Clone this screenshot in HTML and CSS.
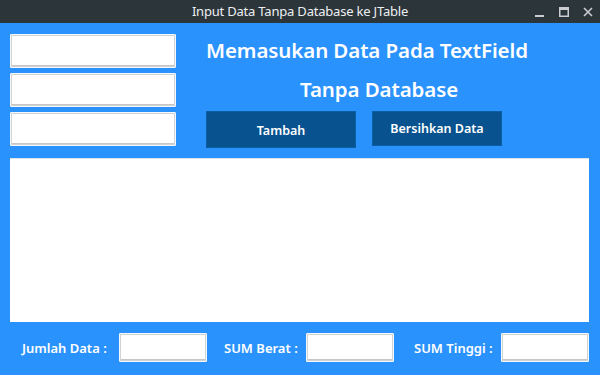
FILE: index.html
```html
<!DOCTYPE html>
<html lang="en">
<head>
    <meta charset="UTF-8">
    <meta name="viewport" content="width=device-width, initial-scale=1.0">
    <title>Input Data Tanpa Database ke JTable</title>
    <link rel="stylesheet" href="styles.css">
</head>
<body>
    <!-- Title bar -->
    <div class="titlebar">
        <span class="title">Input Data Tanpa Database ke JTable</span>
        <div class="win-controls">
            <svg width="10" height="10" viewBox="0 0 10 10"><rect x="0" y="8" width="9" height="2" fill="#c9cdd0"/></svg>
            <svg width="10" height="10" viewBox="0 0 10 10"><rect x="0.75" y="0.75" width="8.5" height="8.5" fill="none" stroke="#c9cdd0" stroke-width="1.5"/><rect x="0" y="0" width="10" height="3" fill="#c9cdd0"/></svg>
            <svg width="10" height="10" viewBox="0 0 10 10"><path d="M1 1 L9 9 M9 1 L1 9" stroke="#c9cdd0" stroke-width="1.6"/></svg>
        </div>
    </div>

    <!-- Main Content -->
    <div class="content">
        <div class="top-row">
            <div class="fields">
                <input type="text" class="field">
                <input type="text" class="field">
                <input type="text" class="field">
            </div>
            <div class="side">
                <h1 class="heading">Memasukan Data Pada TextField</h1>
                <h1 class="heading sub">Tanpa Database</h1>
                <div class="buttons">
                    <button class="btn btn-add">Tambah</button>
                    <button class="btn btn-clear">Bersihkan Data</button>
                </div>
            </div>
        </div>

        <div class="table"></div>

        <div class="summary">
            <label class="sum-label first">Jumlah Data :</label>
            <input type="text" class="field small">
            <label class="sum-label second">SUM Berat :</label>
            <input type="text" class="field small">
            <label class="sum-label third">SUM Tinggi :</label>
            <input type="text" class="field small">
        </div>
    </div>
</body>
</html>
```

FILE: styles.css
```css
body {
    margin: 0;
    padding: 0;
    font-family: "Noto Sans", sans-serif;
    background-color: #2a92fd;
    width: 600px;
    height: 375px;
    overflow: hidden;
}

.titlebar {
    height: 23px;
    background-color: #2c353a;
    color: #eceff1;
    display: flex;
    align-items: center;
    justify-content: center;
    position: relative;
    font-size: 13px;
}

.title {
    margin-top: -1px;
    letter-spacing: -0.2px;
}

.win-controls {
    position: absolute;
    right: 7px;
    top: 7px;
    display: flex;
    gap: 14px;
}

.content {
    padding: 10px 11px 0 10px;
}

.top-row {
    display: flex;
}

.fields {
    display: flex;
    flex-direction: column;
    gap: 5px;
    padding-top: 1px;
}

.field {
    width: 166px;
    height: 34px;
    box-sizing: border-box;
    margin: 0;
    background: #fff;
    border: 1px solid #f4f9ff;
    box-shadow: inset 0 0 0 1px #d2d2d2, inset 0 -2px 0 #c6c6c6;
    border-radius: 1px;
}

.side {
    margin-left: 30px;
}

.heading {
    margin: 0;
    color: #fff;
    font-size: 20.5px;
    font-weight: 600;
    height: 39px;
    line-height: 34px;
    letter-spacing: -0.1px;
}

.heading.sub {
    padding-left: 94px;
}

.buttons {
    display: flex;
    gap: 16px;
    align-items: flex-start;
}

.btn {
    background-color: #07528f;
    color: #fff;
    border: 1px solid #0d5fa3;
    font-family: "Noto Sans", sans-serif;
    font-size: 12.5px;
    font-weight: 600;
    padding: 0;
}

.btn-add {
    width: 150px;
    height: 37px;
    padding-top: 2px;
}

.btn-clear {
    width: 130px;
    height: 35px;
}

.table {
    margin-top: 10px;
    height: 164px;
    background: #fff;
    border-top: 1px solid #dde3ea;
    box-sizing: border-box;
}

.summary {
    display: flex;
    align-items: center;
    margin-top: 11px;
}

.field.small {
    width: 88px;
    height: 29px;
}

.sum-label {
    color: #fff;
    font-size: 13px;
    font-weight: 600;
    margin-right: 6px;
}

.sum-label.first {
    margin-left: 12px;
    width: 91px;
}

.sum-label.second {
    margin-left: 17px;
    width: 76px;
}

.sum-label.third {
    margin-left: 20px;
    width: 81px;
}
```
